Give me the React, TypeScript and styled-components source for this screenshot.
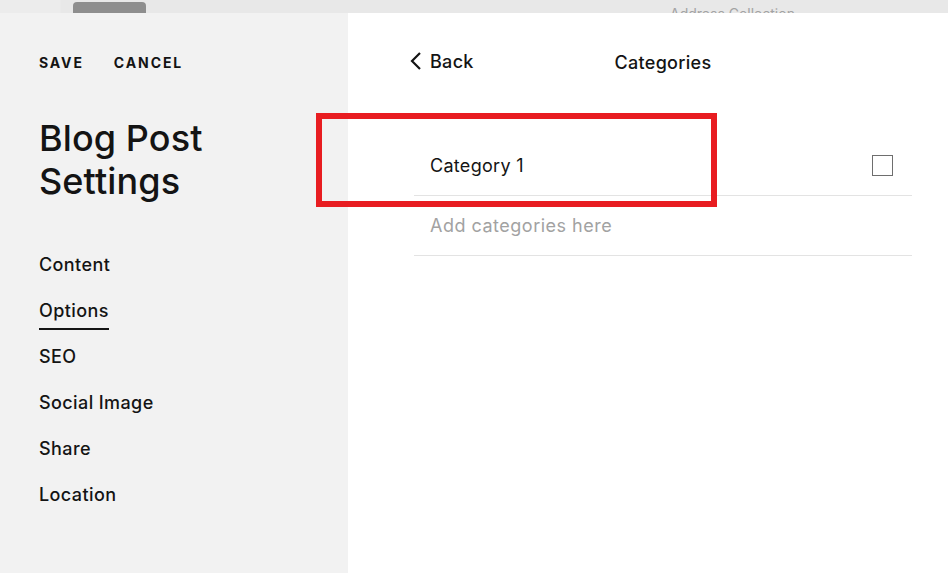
import React from 'react'
import styled, { createGlobalStyle } from 'styled-components'

const GlobalStyle = createGlobalStyle`
  body {
    margin: 0;
    background: #e9e9e9;
    font-family: Inter, "Liberation Sans", sans-serif;
    color: #141414;
  }
`

const navItems = ['Content', 'Options', 'SEO', 'Social Image', 'Share', 'Location']

const App = () => {
  return (
    <>
      <GlobalStyle />
      <Page>
        <TopStrip>
          <Tab />
          <Faded>Address Collection</Faded>
        </TopStrip>
        <Main>
          <Sidebar>
            <Actions>
              <ActionButton>Save</ActionButton>
              <ActionButton>Cancel</ActionButton>
            </Actions>
            <Title>Blog Post<br />Settings</Title>
            <Nav>
              {navItems.map((item) => (
                <NavItem key={item} active={item === 'Options'}>{item}</NavItem>
              ))}
            </Nav>
          </Sidebar>
          <Panel>
            <Header>
              <BackLink>
                <svg width="13" height="20" viewBox="0 0 13 20">
                  <path d="M11 2 L3 10 L11 18" fill="none" stroke="#141414" strokeWidth="2.2" />
                </svg>
                <span>Back</span>
              </BackLink>
              <HeaderTitle>Categories</HeaderTitle>
            </Header>
            <List>
              <Row>
                <span>Category 1</span>
                <Checkbox />
              </Row>
              <Row muted>
                <span>Add categories here</span>
              </Row>
            </List>
          </Panel>
          <Highlight />
        </Main>
      </Page>
    </>
  )
}

export default App

const Page = styled.div`
width: 948px;
height: 573px;
overflow: hidden;
display: flex;
flex-direction: column;
`
const TopStrip = styled.div`
height: 13px;
flex-shrink: 0;
display: flex;
align-items: flex-end;
overflow: hidden;
background: linear-gradient(to right, #ececec 0, #ececec 60px, #e8e8e8 61px);
`
const Tab = styled.div`
margin-left: 73px;
width: 73px;
height: 11px;
background: #8e8e8e;
border-radius: 4px 4px 0 0;
`
const Faded = styled.div`
margin-left: 524px;
font-size: 14px;
line-height: 14px;
color: #a3a3a3;
transform: translateY(8px);
white-space: nowrap;
`
const Main = styled.div`
flex: 1;
display: flex;
position: relative;
`
const Sidebar = styled.div`
width: 348px;
flex-shrink: 0;
background: #f2f2f2;
padding: 39px 0 0 39px;
box-sizing: border-box;
`
const Actions = styled.div`
display: flex;
gap: 30px;
height: 20px;
align-items: center;
`
const ActionButton = styled.button`
border: none;
background: none;
padding: 0;
font-family: inherit;
font-size: 14px;
font-weight: 700;
letter-spacing: 1.9px;
text-transform: uppercase;
color: #141414;
`
const Title = styled.h1`
margin: 45px 0 0;
font-size: 36px;
line-height: 43px;
font-weight: 500;
letter-spacing: 0.1px;
`
const Nav = styled.div`
margin-top: 50px;
display: flex;
flex-direction: column;
align-items: flex-start;
gap: 15px;
`
const NavItem = styled.div<{ active?: boolean }>`
font-size: 18px;
line-height: 24px;
font-weight: 500;
letter-spacing: 0.4px;
padding-bottom: 5px;
border-bottom: 2px solid ${(p) => (p.active ? '#141414' : 'transparent')};
`
const Panel = styled.div`
flex: 1;
background: #fff;
padding: 37px 0 0 66px;
box-sizing: border-box;
`
const Header = styled.div`
width: 498px;
display: grid;
grid-template-columns: 1fr auto 1fr;
align-items: center;
height: 24px;
`
const BackLink = styled.div`
display: flex;
align-items: center;
gap: 8px;
margin-left: -5px;
font-size: 18px;
font-weight: 500;
letter-spacing: 0.3px;
margin-top: -2px;
`
const HeaderTitle = styled.div`
font-size: 18px;
font-weight: 500;
letter-spacing: 0.3px;
`
const List = styled.div`
width: 498px;
margin-top: 62px;
`
const Row = styled.div<{ muted?: boolean }>`
height: 60px;
display: flex;
align-items: center;
justify-content: space-between;
padding: 0 19px 0 16px;
border-bottom: 1px solid #e3e3e3;
box-sizing: border-box;
font-size: 18px;
letter-spacing: ${(p) => (p.muted ? '0.5px' : '0.3px')};
color: ${(p) => (p.muted ? '#a2a2a2' : '#141414')};
`
const Checkbox = styled.div`
width: 21px;
height: 21px;
box-sizing: border-box;
border: 1.5px solid #6e6e6e;
`
const Highlight = styled.div`
position: absolute;
left: 316px;
top: 100px;
width: 401px;
height: 94px;
box-sizing: border-box;
border: 6px solid #e81d21;
`
